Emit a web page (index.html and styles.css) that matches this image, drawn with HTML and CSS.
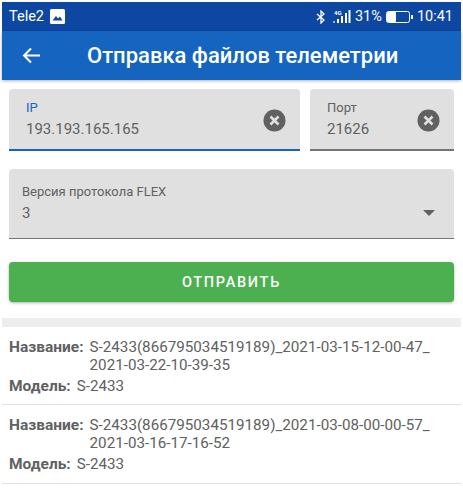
FILE: index.html
```html
<!DOCTYPE html>
<html lang="ru">
<head>
    <meta charset="UTF-8">
    <meta name="viewport" content="width=device-width, initial-scale=1.0">
    <title>Отправка файлов телеметрии</title>
    <link rel="stylesheet" href="styles.css">
</head>
<body>
    <div class="status-bar">
        <div class="status-left">
            <span>Tele2</span>
            <svg class="pic-icon" width="15" height="15" viewBox="0 0 15 15">
                <rect x="0" y="0" width="15" height="15" rx="1.5" fill="#fff"/>
                <path d="M2.5 11.5 L6 7 L8 9.5 L10 7.5 L12.5 11.5 Z" fill="#0d47a1"/>
            </svg>
        </div>
        <div class="status-right">
            <svg width="10" height="14" viewBox="0 0 10 14" fill="none" stroke="#fff" stroke-width="1.3">
                <path d="M1 4 L8 10 L5 13 L5 1 L8 4 L1 10"/>
            </svg>
            <span class="net">
                <span class="net-label">4G</span>
                <svg width="18" height="13" viewBox="0 0 18 13" fill="#fff">
                    <rect x="0" y="11" width="2" height="2" opacity="0.6"/>
                    <rect x="4" y="9" width="2" height="4"/>
                    <rect x="8" y="6" width="2" height="7"/>
                    <rect x="12" y="3" width="2" height="10"/>
                    <rect x="15.5" y="0" width="2" height="13"/>
                </svg>
            </span>
            <span>31%</span>
            <svg width="27" height="12" viewBox="0 0 27 12">
                <rect x="0.5" y="0.5" width="23" height="11" rx="2" fill="none" stroke="#fff"/>
                <rect x="1" y="1" width="9" height="10" rx="1" fill="#fff"/>
                <rect x="25" y="4" width="2" height="4" fill="#fff"/>
            </svg>
            <span>10:41</span>
        </div>
    </div>

    <header class="app-bar">
        <svg class="back" width="18" height="17" viewBox="0 0 18 17" fill="none" stroke="#fff" stroke-width="2">
            <path d="M18 8.5 H2 M9 1.5 L2 8.5 L9 15.5"/>
        </svg>
        <h1>Отправка файлов телеметрии</h1>
    </header>

    <main class="content">
        <div class="row">
            <div class="field field-ip active">
                <div class="field-text">
                    <label>IP</label>
                    <div class="value">193.193.165.165</div>
                </div>
                <svg class="clear" width="23" height="23" viewBox="0 0 23 23">
                    <circle cx="11.5" cy="11.5" r="11" fill="#616161"/>
                    <path d="M7.5 7.5 L15.5 15.5 M15.5 7.5 L7.5 15.5" stroke="#e0e0e0" stroke-width="2.6"/>
                </svg>
            </div>
            <div class="field field-port">
                <div class="field-text">
                    <label>Порт</label>
                    <div class="value">21626</div>
                </div>
                <svg class="clear" width="23" height="23" viewBox="0 0 23 23">
                    <circle cx="11.5" cy="11.5" r="11" fill="#616161"/>
                    <path d="M7.5 7.5 L15.5 15.5 M15.5 7.5 L7.5 15.5" stroke="#e0e0e0" stroke-width="2.6"/>
                </svg>
            </div>
        </div>

        <div class="field select">
            <div class="field-text">
                <label>Версия протокола FLEX</label>
                <div class="value">3</div>
            </div>
            <span class="arrow"></span>
        </div>

        <button class="send">ОТПРАВИТЬ</button>
    </main>

    <div class="band"></div>

    <ul class="files">
        <li>
            <div class="line">
                <strong>Название:</strong>
                <span>S-2433(866795034519189)_2021-03-15-12-00-47_<br>2021-03-22-10-39-35</span>
            </div>
            <div class="line model"><strong>Модель:</strong> <span>S-2433</span></div>
        </li>
        <li>
            <div class="line">
                <strong>Название:</strong>
                <span>S-2433(866795034519189)_2021-03-08-00-00-57_<br>2021-03-16-17-16-52</span>
            </div>
            <div class="line model"><strong>Модель:</strong> <span>S-2433</span></div>
        </li>
    </ul>
</body>
</html>
```

FILE: styles.css
```css
html {
    background: #fff;
}
body {
    font-family: 'Roboto', sans-serif;
    color: #616161;
    margin: 0;
    padding: 2px 2px 0;
    height: 487px;
    overflow: hidden;
}
.status-bar {
    height: 29px;
    background: #0d47a1;
    color: #fff;
    font-size: 14.5px;
    display: flex;
    justify-content: space-between;
    align-items: center;
    padding: 0 8px 0 7px;
}
.status-left,
.status-right {
    display: flex;
    align-items: center;
}
.status-left {
    gap: 6px;
}
.status-right {
    gap: 4px;
}
.net {
    position: relative;
    padding-left: 3px;
    display: flex;
}
.net-label {
    position: absolute;
    left: 4px;
    top: -1px;
    font-size: 6px;
    font-weight: bold;
}
.app-bar {
    height: 49px;
    background: #1565c0;
    color: #fff;
    display: flex;
    align-items: center;
    padding-left: 20px;
    box-shadow: 0 1px 3px rgba(0, 0, 0, 0.3);
}
.app-bar h1 {
    font-size: 22px;
    font-weight: 500;
    margin: 0 0 0 47px;
}
.content {
    padding: 9px 7px 0;
}
.row {
    display: flex;
    gap: 10px;
}
.field {
    background: #e0e0e0;
    border-radius: 4px 4px 0 0;
    border-bottom: 1px solid #757575;
    display: flex;
    align-items: center;
    justify-content: space-between;
    box-sizing: border-box;
}
.field-ip {
    flex: 1;
    height: 62px;
    padding: 0 14px 0 17px;
}
.field-port {
    width: 144px;
    height: 62px;
    padding: 0 14px 0 17px;
    border-bottom-width: 2px;
}
.active {
    border-bottom: 2px solid #1565c0;
}
.active label {
    color: #1565c0;
}
.clear {
    margin-top: 2px;
}
.field-text label {
    display: block;
    font-size: 13px;
    line-height: 16px;
}
.value {
    font-size: 15px;
    line-height: 20px;
    margin-top: 3px;
}
.select {
    height: 70px;
    margin-top: 18px;
    padding: 0 19px 0 13px;
}
.arrow {
    width: 0;
    height: 0;
    border-left: 6px solid transparent;
    border-right: 6px solid transparent;
    border-top: 6px solid #616161;
    margin-top: 18px;
}
.send {
    display: block;
    width: 100%;
    height: 40px;
    margin-top: 23px;
    border: 0;
    border-radius: 4px;
    background: #4caf50;
    color: #fff;
    font-family: inherit;
    font-size: 14.5px;
    font-weight: 500;
    letter-spacing: 1.7px;
    box-shadow: 0 1px 3px rgba(0, 0, 0, 0.3);
}
.band {
    height: 9px;
    margin-top: 16px;
    background: #eee;
}
.files {
    list-style: none;
    margin: 0;
    padding: 0;
}
.files li {
    height: 79px;
    padding: 11px 7px 0;
    box-sizing: border-box;
    border-bottom: 1px solid #e0e0e0;
    font-size: 15.2px;
    line-height: 18px;
}
.files li:first-child {
    height: 78px;
}
.line {
    display: flex;
    gap: 6px;
}
.model {
    margin-top: 3px;
}
.line strong {
    font-size: 15.5px;
    font-weight: 700;
}
```
